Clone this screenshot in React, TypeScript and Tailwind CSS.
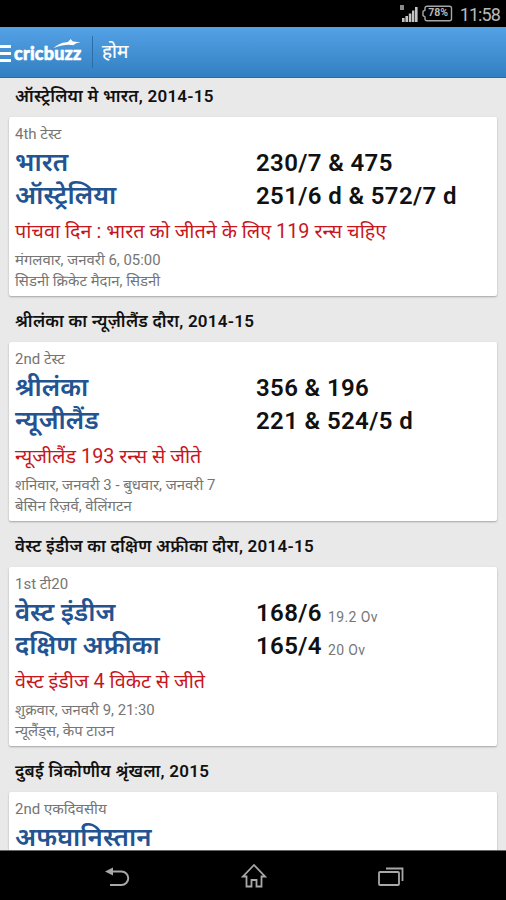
type Team = { name: string; score?: string; overs?: string };

type Match = {
  series: string;
  title: string;
  teams: Team[];
  status?: string;
  date?: string;
  venue?: string;
};

const matches: Match[] = [
  {
    series: "ऑस्ट्रेलिया मे भारत, 2014-15",
    title: "4th टेस्ट",
    teams: [
      { name: "भारत", score: "230/7 & 475" },
      { name: "ऑस्ट्रेलिया", score: "251/6 d & 572/7 d" },
    ],
    status: "पांचवा दिन : भारत को जीतने के लिए 119 रन्स चहिए",
    date: "मंगलवार, जनवरी 6, 05:00",
    venue: "सिडनी क्रिकेट मैदान, सिडनी",
  },
  {
    series: "श्रीलंका का न्यूज़ीलैंड दौरा, 2014-15",
    title: "2nd टेस्ट",
    teams: [
      { name: "श्रीलंका", score: "356 & 196" },
      { name: "न्यूजीलैंड", score: "221 & 524/5 d" },
    ],
    status: "न्यूजीलैंड 193 रन्स से जीते",
    date: "शनिवार, जनवरी 3 - बुधवार, जनवरी 7",
    venue: "बेसिन रिज़र्व, वेलिंगटन",
  },
  {
    series: "वेस्ट इंडीज का दक्षिण अफ्रीका दौरा, 2014-15",
    title: "1st टी20",
    teams: [
      { name: "वेस्ट इंडीज", score: "168/6", overs: "19.2 Ov" },
      { name: "दक्षिण अफ्रीका", score: "165/4", overs: "20 Ov" },
    ],
    status: "वेस्ट इंडीज 4 विकेट से जीते",
    date: "शुक्रवार, जनवरी 9, 21:30",
    venue: "न्यूलैंड्स, केप टाउन",
  },
  {
    series: "दुबई त्रिकोणीय श्रृंखला, 2015",
    title: "2nd एकदिवसीय",
    teams: [{ name: "अफघानिस्तान" }],
  },
];

function StatusBar() {
  return (
    <div className="flex h-[27px] shrink-0 items-center justify-end bg-black pr-[6px] text-[#b9b9b9]">
      <svg width="18" height="18" viewBox="0 0 18 18" fill="#c4c4c4" className="mr-[4px]">
        <rect x="0" y="0" width="4" height="5" fill="#8a8a8a" />
        <rect x="2" y="13" width="2.6" height="4" />
        <rect x="5.4" y="11" width="2.6" height="6" />
        <rect x="8.8" y="8.5" width="2.6" height="8.5" />
        <rect x="12" y="5.5" width="2.4" height="11.5" />
        <rect x="15" y="2" width="2.6" height="15" />
      </svg>
      <div className="relative mr-[7px] flex h-[17px] w-[31px] items-center justify-center">
        <svg width="31" height="17" viewBox="0 0 31 17" fill="none" stroke="#a6a6a6" strokeWidth="1.4" className="absolute inset-0">
          <path d="M5 1.2h22.5a2 2 0 0 1 2 2v10.600a2 2 0 0 1-2 2H5a2 2 0 0 1-2-2v-2L1 10.500v-4L3 5.200V3.200a2 2 0 0 1 2-2z" />
        </svg>
        <span className="relative pl-[2px] text-[10.5px] font-bold leading-none">78%</span>
      </div>
      <span className="mt-[2px] text-[18px] leading-none tracking-[-0.9px]">11:58</span>
    </div>
  );
}

function Header() {
  return (
    <header className="flex h-[51px] shrink-0 items-center border-b border-[#2a6ca8] bg-linear-to-b from-[#54a2e6] to-[#327fc1] text-white">
      <div className="mt-[2px] flex w-[11px] flex-col gap-[4px]">
        <span className="h-[3px] bg-white" />
        <span className="h-[3px] bg-white" />
        <span className="h-[3px] bg-white" />
      </div>
      <div className="relative ml-[3px] mt-[2px] w-[68px]">
        <svg width="28" height="9" viewBox="0 0 30 10" className="absolute -top-px left-[39px]" fill="#fff">
          <path d="M0 10C6 5 11 3.500 16 3.200L19 0l2.500 2.800L30 3.500c-4 .6-6 1.500-8 3.400-5-1.400-12-.6-22 3.100z" />
        </svg>
        <span className="block font-['Lato','Liberation_Sans',sans-serif] text-[18px] font-black leading-[26px] tracking-[0.2px] [-webkit-text-stroke:0.6px_white]">
          cricbuzz
        </span>
      </div>
      <div className="ml-[10px] h-[32px] w-px bg-[#2d6da7]" />
      <span className="ml-[9px] text-[19px] leading-[30px] [-webkit-text-stroke:0.2px_white]">होम</span>
    </header>
  );
}

function MatchCard({ match }: { match: Match }) {
  return (
    <section className="shrink-0">
      <h2 className="flex h-[46px] items-center whitespace-nowrap pl-[15px] pt-[5px] text-[17px] font-semibold tracking-[0.25px] text-[#111]">
        {match.series}
      </h2>
      <div className="mx-[9px] h-[179px] whitespace-nowrap rounded-[2px] bg-white px-[6px] pt-[7px] shadow-[0_1px_2px_rgba(0,0,0,0.3)]">
        <div className="mb-[3px] flex h-[20px] items-center pt-[1px] text-[15px] text-[#757575]">{match.title}</div>
        {match.teams.map((team) => (
          <div key={team.name} className="flex h-[33px] items-center">
            <span className="w-[241px] pb-[2px] text-[25.8px] font-semibold leading-[31px] text-[#235391]">{team.name}</span>
            <span className="text-[24px] font-semibold leading-[33px] tracking-[0.38px] text-[#111]">{team.score}</span>
            {team.overs && <span className="ml-[6px] pt-[7px] text-[14px] tracking-[0.4px] text-[#777]">{team.overs}</span>}
          </div>
        ))}
        <div className="flex h-[36px] items-center pt-[2px] text-[19.8px] text-[#c8161d]">{match.status}</div>
        <div className="flex h-[21px] items-center pt-[2px] text-[14.9px] text-[#757575]">{match.date}</div>
        <div className="flex h-[20px] items-center pt-[3px] text-[14.9px] text-[#757575]">{match.venue}</div>
      </div>
    </section>
  );
}

function NavBar() {
  return (
    <nav className="flex h-[50px] shrink-0 items-center justify-between border-t border-[#666] bg-black pl-[104px] pr-[102px] pt-[3px]">
      <svg width="26" height="20" viewBox="0 0 26 20" fill="none" stroke="#a8a8a8" strokeWidth="2">
        <path d="M7 4.500h10.500a6 6 0 0 1 0 13.500H6" />
        <path d="M1 4.500l8-4v8z" fill="#a8a8a8" stroke="none" />
      </svg>
      <svg width="26" height="26" viewBox="0 0 26 26" fill="none" stroke="#a8a8a8" strokeWidth="1.800" className="-mt-[3px]">
        <path d="M13 2L2 13.500h3.500V23.500h5v-6.500h5v6.500h5V13.500H24z" />
      </svg>
      <svg width="26" height="20" viewBox="0 0 26 20" fill="none" stroke="#a8a8a8" strokeWidth="1.800">
        <rect x="1" y="5" width="20" height="13" rx="1" />
        <path d="M8 1.500h16.500V14" />
      </svg>
    </nav>
  );
}

export default function App() {
  return (
    <div className="flex h-[900px] w-[506px] flex-col overflow-hidden bg-[#e9e9e9] font-['Roboto','Noto_Sans_Devanagari','Noto_Sans',sans-serif]">
      <StatusBar />
      <Header />
      <main className="-mt-[7px] flex min-h-0 flex-1 flex-col overflow-hidden">
        {matches.map((match) => (
          <MatchCard key={match.series} match={match} />
        ))}
      </main>
      <NavBar />
    </div>
  );
}
